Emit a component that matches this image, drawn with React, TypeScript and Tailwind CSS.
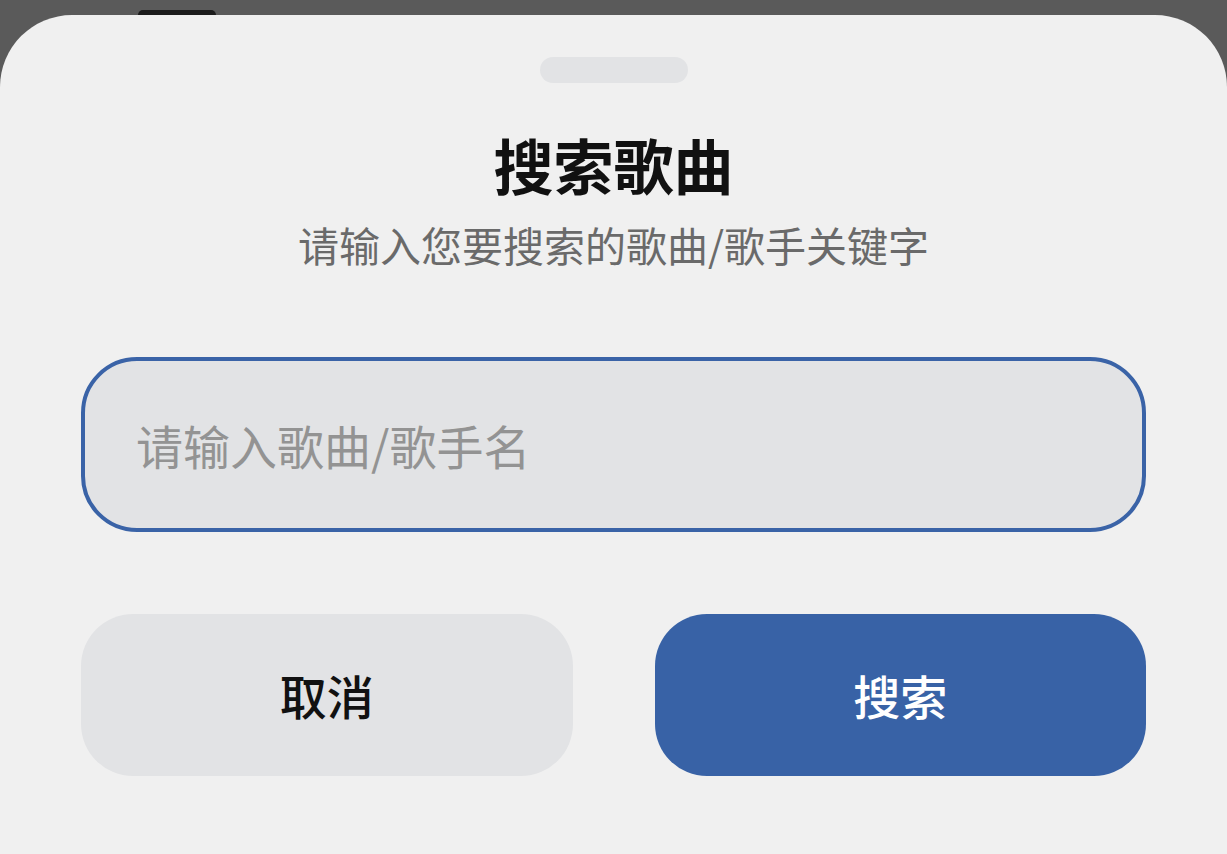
import React, { useState } from "react";

const cjk = { fontFamily: '"Noto Sans CJK SC", "Noto Sans", sans-serif' };

export default function App() {
  const [query, setQuery] = useState("");

  return (
    <div className="w-[1227px] h-[854px] overflow-hidden bg-[#5a5a5a] flex flex-col" style={cjk}>
      {/* backdrop peeking above the sheet */}
      <div className="h-[15px] shrink-0 flex items-end pl-[138px]">
        <div className="w-[78px] h-[5px] rounded-t-full bg-[#1c1c1c]" />
      </div>

      <div className="flex-1 bg-[#f0f0f0] rounded-t-[72px] px-[81px] pt-[42px] flex flex-col">
        <div className="self-center w-[148px] h-[26px] rounded-full bg-[#e2e3e5]" />

        <h2 className="mt-[41px] text-center text-[60px] leading-[80px] font-bold text-[#111]">
          搜索歌曲
        </h2>
        <p className="mt-[13px] text-center text-[41px] leading-[54px] text-[#6a6a6a]">
          请输入您要搜索的歌曲/歌手关键字
        </p>

        <input
          value={query}
          onChange={(e) => setQuery(e.target.value)}
          placeholder="请输入歌曲/歌手名"
          className="mt-[86px] h-[175px] w-full shrink-0 rounded-[56px] border-[4px] border-[#3a63a7] bg-[#e2e3e5] px-[51px] text-[47px] text-[#222] placeholder:text-[#939393] outline-none"
          style={cjk}
        />

        <div className="mt-[82px] grid grid-cols-2 gap-[82px]">
          <button className="h-[162px] rounded-[52px] bg-[#e2e3e5] text-[47px] font-medium text-[#111]" style={cjk}>
            取消
          </button>
          <button className="h-[162px] rounded-[52px] bg-[#3862a6] text-[47px] font-medium text-white" style={cjk}>
            搜索
          </button>
        </div>
      </div>
    </div>
  );
}
